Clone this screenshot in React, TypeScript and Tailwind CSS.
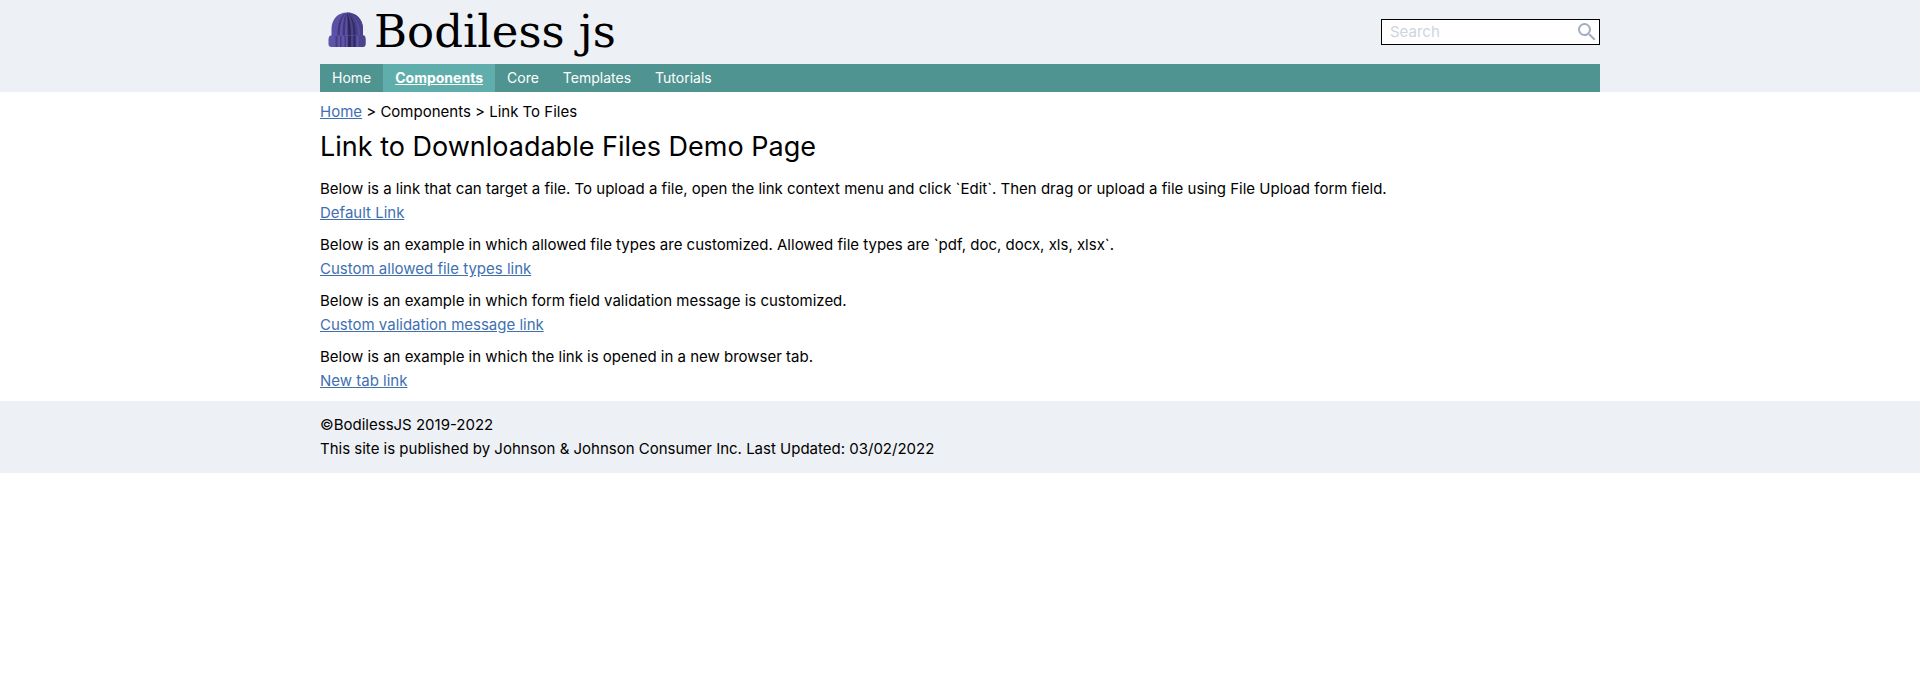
import { MdSearch } from 'react-icons/md';

const navItems = ['Home', 'Components', 'Core', 'Templates', 'Tutorials'];

const examples = [
  {
    text: 'Below is a link that can target a file. To upload a file, open the link context menu and click `Edit`. Then drag or upload a file using File Upload form field.',
    link: 'Default Link',
  },
  {
    text: 'Below is an example in which allowed file types are customized. Allowed file types are `pdf, doc, docx, xls, xlsx`.',
    link: 'Custom allowed file types link',
  },
  {
    text: 'Below is an example in which form field validation message is customized.',
    link: 'Custom validation message link',
  },
  {
    text: 'Below is an example in which the link is opened in a new browser tab.',
    link: 'New tab link',
  },
];

function Beanie() {
  return (
    <svg viewBox="0 0 38 36" className="mb-1 h-9 w-[38px]" aria-hidden="true">
      <path d="M3.5 24V17C3.5 7 10 .5 19 .5S35 7 35 17v7z" fill="#5b50a5" />
      <path d="M19 .5c9 0 16 6.500 16 16.500v7H19z" fill="#4a4189" />
      <path d="M16 2C11 7 9.500 14 9.500 24h2.200C11.700 14 13 7 17 2z" fill="#40377a" />
      <path d="M18 1.500c-2.500 5-3.300 13-3.300 22.500h2.300C17 14 17.500 7 19 1.500z" fill="#40377a" />
      <path d="M19 1c1 6 1.200 14 1.200 23h2.600c0-10-.8-17-3.800-23z" fill="#2c2558" />
      <path d="M20.500 1.500C24 7 25.500 14 25.500 24h2.300c0-10-1.800-17-7.300-22.500z" fill="#342c66" />
      <path d="M24 3c5 5 6.500 12 6.500 21H32c0-9-2-16-8-21z" fill="#5b50a5" />
      <path d="M2.500 23.500h34Q37.500 24 37.500 27v5q0 3-3 3H3.500q-3 0-3-3v-5q0-3 2-3.500z" fill="#5f54aa" />
      <path d="M19.500 23.500h16q2 .5 2 3.500v5q0 3-3 3h-15z" fill="#4c438c" />
      <path d="M7.500 24h2v11h-2zM12 24h1.500v11H12zM16.500 24h1.500v11h-1.500z" fill="#463c82" />
      <path d="M20 24h3v11h-3zM25.500 24h2v11h-2z" fill="#2f285e" />
      <path d="M28.500 24h2v11h-2z" fill="#5f54aa" />
    </svg>
  );
}

function Header() {
  return (
    <header className="bg-[#edf0f5]">
      <div className="mx-auto max-w-[1280px]">
        <div className="flex h-16 items-center justify-between">
          <a href="#home" className="flex items-center gap-2 pl-2 text-black">
            <Beanie />
            <span className="font-['DejaVu_Serif',serif] text-[45px] leading-[60px]">Bodiless js</span>
          </a>
          <form role="search" className="flex h-[26px] w-[219px] items-center border border-black bg-white">
            <input
              type="text"
              aria-label="Search"
              placeholder="Search"
              className="min-w-0 flex-1 bg-transparent px-2 text-[15px] leading-6 outline-none placeholder:text-[#cdd5df]"
            />
            <button type="button" aria-label="Submit search" className="text-[#a2aebf]">
              <MdSearch className="size-6" />
            </button>
          </form>
        </div>
        <nav className="flex bg-[#4f9490] text-sm leading-7 text-white">
          {navItems.map((item) => (
            <a
              key={item}
              href={`#${item.toLowerCase()}`}
              className={item === 'Components' ? 'bg-[#60aeab] px-3 font-bold underline' : 'px-3'}
            >
              {item}
            </a>
          ))}
        </nav>
      </div>
    </header>
  );
}

export default function App() {
  return (
    <div className="bg-white font-['Inter',sans-serif] text-[15px] leading-6 text-black">
      <Header />
      <main className="mx-auto max-w-[1280px] py-2">
        <div>
          <a href="#home" className="text-[#4170b1] underline">Home</a> &gt; Components &gt; Link To Files
        </div>
        <h1 className="mt-1 mb-3 text-[27px] leading-[37px]">Link to Downloadable Files Demo Page</h1>
        <div className="flex flex-col gap-2">
          {examples.map((example) => (
            <div key={example.link}>
              <p>{example.text}</p>
              <a href="#file" className="text-[#4170b1] underline">{example.link}</a>
            </div>
          ))}
        </div>
      </main>
      <footer className="bg-[#edf0f5] py-3">
        <div className="mx-auto max-w-[1280px]">
          <p>©BodilessJS 2019-2022</p>
          <p>This site is published by Johnson &amp; Johnson Consumer Inc. Last Updated: 03/02/2022</p>
        </div>
      </footer>
    </div>
  );
}
